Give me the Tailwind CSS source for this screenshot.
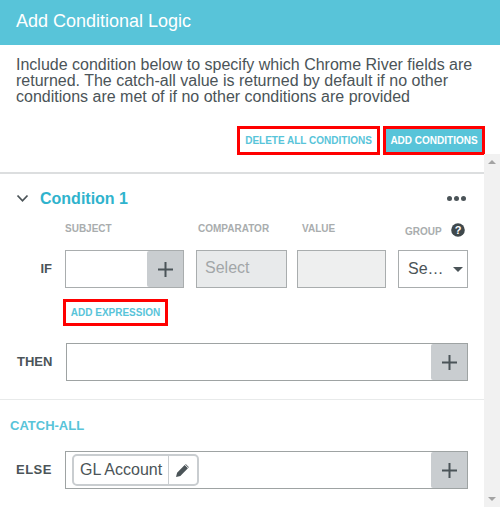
<!DOCTYPE html>
<html lang="en">
<head>
    <meta charset="UTF-8">
    <title>Add Conditional Logic</title>
    <script src="https://cdn.jsdelivr.net/npm/@tailwindcss/browser@4"></script>
</head>
<body class="bg-white overflow-hidden font-['Liberation_Sans',Arial,sans-serif] text-[#4b5458]">
    <div class="relative w-[500px] h-[507px] overflow-hidden">
        <!-- Header -->
        <header class="h-[45px] bg-[#58c4d9] text-white text-[18px] leading-[42px] pl-4">Add Conditional Logic</header>

        <!-- Intro -->
        <p class="pl-4 pr-2 pt-[12px] text-[16px] leading-[16px] h-[81px]">Include condition below to specify which Chrome River fields are returned. The catch-all value is returned by default if no other conditions are met of if no other conditions are provided</p>

        <div class="flex justify-end gap-[3px] pr-[15px] h-[29px]">
            <button class="w-[143px] h-[29px] border-[3px] border-[#f00] bg-white text-[#58c4d9] text-[10px] font-bold">DELETE ALL CONDITIONS</button>
            <button class="w-[102px] h-[29px] border-[3px] border-[#f00] bg-[#58c4d9] text-white text-[10px] font-bold">ADD CONDITIONS</button>
        </div>

        <!-- Scrollable part -->
        <main class="w-[484px] mt-[17px] border-t-2 border-[#dcdedf]">
            <section class="h-[226px] border-b border-[#e8eaea]">
                <div class="flex items-center h-[48px] pt-[1px]">
                    <svg class="ml-4 w-[13px] h-[9px]" viewBox="0 0 13 9" fill="none" stroke="#4b5458" stroke-width="1.8"><path d="M1.5 1.5 6.5 6.8 11.5 1.5"/></svg>
                    <h2 class="ml-[11px] text-[16px] font-bold text-[#2fb3cd]">Condition 1</h2>
                    <div class="ml-auto mr-[18px] flex gap-[2px]">
                        <span class="w-[5px] h-[5px] rounded-full bg-[#4b5458]"></span>
                        <span class="w-[5px] h-[5px] rounded-full bg-[#4b5458]"></span>
                        <span class="w-[5px] h-[5px] rounded-full bg-[#4b5458]"></span>
                    </div>
                </div>

                <div class="grid grid-cols-[119px_91px_89px_70px] gap-x-[10px] pl-[65px] text-[10px] font-bold text-[#a9adae] h-[30px] mt-[-2px]">
                    <span class="pt-[1px]">SUBJECT</span>
                    <span class="ml-[4px] pt-[1px]">COMPARATOR</span>
                    <span class="ml-[7px] pt-[1px]">VALUE</span>
                    <span class="flex items-start pt-[4px] ml-[11px] gap-[9px]">GROUP
                        <svg class="w-[14px] h-[14px] shrink-0 mt-[-1px]" viewBox="0 0 14 14"><circle cx="7" cy="7" r="6.8" fill="#3f484c"/><text x="7" y="11" text-anchor="middle" font-size="11" font-weight="700" fill="#fff">?</text></svg>
                    </span>
                </div>

                <div class="flex h-[38px]">
                    <span class="w-[65px] pr-[13px] text-right text-[13px] font-bold leading-[38px]">IF</span>
                    <div class="w-[119px] border border-[#a9adae] flex justify-end">
                        <span class="w-[36px] bg-[#c9cdd0] flex items-center justify-center rounded-l-[2px]">
                            <svg class="w-[15px] h-[15px]" viewBox="0 0 15 15" stroke="#4b5458" stroke-width="2"><path d="M7.5 0V15M0 7.5H15"/></svg>
                        </span>
                    </div>
                    <div class="ml-[12px] w-[91px] border border-[#a9adae] bg-[#e8eaeb] text-[#a2a6a8] text-[16px] pl-[8px] leading-[34px]">Select</div>
                    <div class="ml-[10px] w-[89px] border border-[#a9adae] bg-[#eeefef]"></div>
                    <div class="ml-[12px] w-[70px] border border-[#a9adae] flex items-center pl-[9px] text-[16px]">
                        Se…
                        <span class="ml-[9px] w-0 h-0 border-x-[5px] border-x-transparent border-t-[5px] border-t-[#4b5458]"></span>
                    </div>
                </div>

                <button class="block ml-[63px] mt-[11px] w-[105px] h-[27px] border-[3px] border-[#f00] text-[#58c4d9] text-[10px] font-bold">ADD EXPRESSION</button>

                <div class="flex mt-[17px] h-[38px]">
                    <span class="w-[66px] pl-[17px] text-[13px] font-bold leading-[38px]">THEN</span>
                    <div class="w-[402px] border border-[#9ea3a3] flex justify-end">
                        <span class="w-[36px] bg-[#c9cdd0] flex items-center justify-center rounded-l-[2px]">
                            <svg class="w-[15px] h-[15px]" viewBox="0 0 15 15" stroke="#4b5458" stroke-width="2"><path d="M7.5 0V15M0 7.5H15"/></svg>
                        </span>
                    </div>
                </div>
            </section>

            <section>
                <h3 class="pl-[10px] pt-[18px] text-[13px] leading-[15px] font-bold text-[#58c4d9]">CATCH-ALL</h3>
                <div class="flex mt-[18px] h-[38px]">
                    <span class="w-[65px] pl-[16px] text-[13px] tracking-[0.5px] font-bold leading-[38px]">ELSE</span>
                    <div class="w-[403px] border border-[#9ea3a3] flex justify-between">
                        <div class="ml-[6px] mt-[2px] h-[32px] w-[127px] border-2 border-[#c9cdd0] rounded-[5px] flex items-center">
                            <span class="w-[95px] pl-[6px] text-[16px] leading-[28px] border-r border-[#c9cdd0]">GL Account</span>
                            <svg class="ml-[7px] w-[13px] h-[13px]" viewBox="0 0 24 24" fill="#4b5458"><path d="M0 24l2-8L16 2l6 6L8 22zM18 0l6 6-1 1-6-6z"/></svg>
                        </div>
                        <span class="w-[36px] bg-[#c9cdd0] flex items-center justify-center rounded-l-[2px]">
                            <svg class="w-[15px] h-[15px]" viewBox="0 0 15 15" stroke="#4b5458" stroke-width="2"><path d="M7.5 0V15M0 7.5H15"/></svg>
                        </span>
                    </div>
                </div>
            </section>
        </main>

        <!-- Scrollbar -->
        <div class="absolute right-0 top-[154px] bottom-0 w-[16px] bg-[#f1f1f1] flex flex-col justify-between items-center py-[6px]">
            <span class="w-0 h-0 border-x-[4px] border-x-transparent border-b-[4px] border-b-[#a3a3a3]"></span>
            <span class="w-0 h-0 border-x-[4px] border-x-transparent border-t-[4px] border-t-[#a3a3a3]"></span>
        </div>
    </div>
</body>
</html>
